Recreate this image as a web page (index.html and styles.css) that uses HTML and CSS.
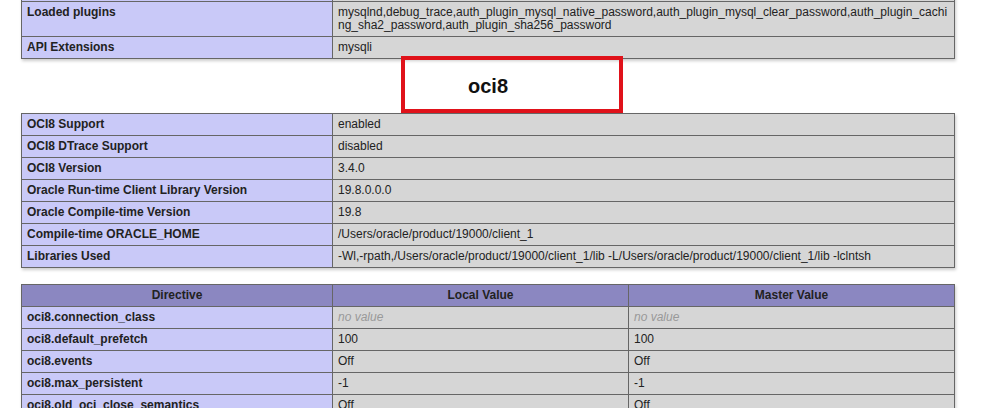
FILE: index.html
```html
<!DOCTYPE html>
<html>
<head>
<meta charset="utf-8">
<title>phpinfo()</title>
<link rel="stylesheet" href="styles.css">
</head>
<body>
<div class="page">
  <table class="info">
    <tr><td class="e">Tracing</td><td class="v">n/a</td></tr>
    <tr><td class="e">Loaded plugins</td><td class="v">mysqlnd,debug_trace,auth_plugin_mysql_native_password,auth_plugin_mysql_clear_password,auth_plugin_caching_sha2_password,auth_plugin_sha256_password</td></tr>
    <tr><td class="e">API Extensions</td><td class="v">mysqli</td></tr>
  </table>
  <h2 class="section"><a name="module_oci8">oci8</a></h2>
  <div class="mark"></div>
  <table class="info">
    <tr><td class="e">OCI8 Support</td><td class="v">enabled</td></tr>
    <tr><td class="e">OCI8 DTrace Support</td><td class="v">disabled</td></tr>
    <tr><td class="e">OCI8 Version</td><td class="v">3.4.0</td></tr>
    <tr><td class="e">Oracle Run-time Client Library Version</td><td class="v">19.8.0.0.0</td></tr>
    <tr><td class="e">Oracle Compile-time Version</td><td class="v">19.8</td></tr>
    <tr><td class="e">Compile-time ORACLE_HOME</td><td class="v">/Users/oracle/product/19000/client_1</td></tr>
    <tr><td class="e">Libraries Used</td><td class="v">-Wl,-rpath,/Users/oracle/product/19000/client_1/lib -L/Users/oracle/product/19000/client_1/lib -lclntsh</td></tr>
  </table>
  <table class="info">
    <tr class="h"><th class="c1">Directive</th><th class="c2">Local Value</th><th>Master Value</th></tr>
    <tr><td class="e">oci8.connection_class</td><td class="v"><i>no value</i></td><td class="v"><i>no value</i></td></tr>
    <tr><td class="e">oci8.default_prefetch</td><td class="v">100</td><td class="v">100</td></tr>
    <tr><td class="e">oci8.events</td><td class="v">Off</td><td class="v">Off</td></tr>
    <tr><td class="e">oci8.max_persistent</td><td class="v">-1</td><td class="v">-1</td></tr>
    <tr><td class="e">oci8.old_oci_close_semantics</td><td class="v">Off</td><td class="v">Off</td></tr>
  </table>
</div>
</body>
</html>
```
FILE: styles.css
```css
html, body {
  margin: 0;
  padding: 0;
  background: #fff;
}
body {
  color: #222;
  font-family: "Liberation Sans", Arial, Helvetica, sans-serif;
  overflow: hidden;
}
.page {
  position: relative;
  width: 976px;
  margin-top: -37px;
  text-align: center;
}
.info {
  width: 934px;
  margin: 16px auto;
  border-collapse: collapse;
  table-layout: fixed;
  text-align: left;
  box-shadow: 1px 2px 3px #ccc;
}
.info td, .info th {
  border: 1px solid #666;
  font-size: 12px;
  line-height: 13px;
  vertical-align: baseline;
  padding: 4px 5px;
  overflow-wrap: anywhere;
}
.e {
  background: #c9c9f8;
  width: 300px;
  font-weight: bold;
}
.v {
  background: #d6d6d6;
}
.v i {
  color: #999;
}
.h th {
  background: #8b87c1;
  font-weight: bold;
  text-align: center;
}
.c1 {
  width: 300px;
}
.c2 {
  width: 285px;
}
.section {
  font-size: 20px;
  line-height: 22px;
  margin: 16px 0;
  text-align: center;
}
.section a {
  color: #111;
  text-decoration: none;
}
.mark {
  position: absolute;
  left: 401px;
  top: 77px;
  width: 214px;
  height: 49px;
  border: 4px solid #e0121a;
}
```
